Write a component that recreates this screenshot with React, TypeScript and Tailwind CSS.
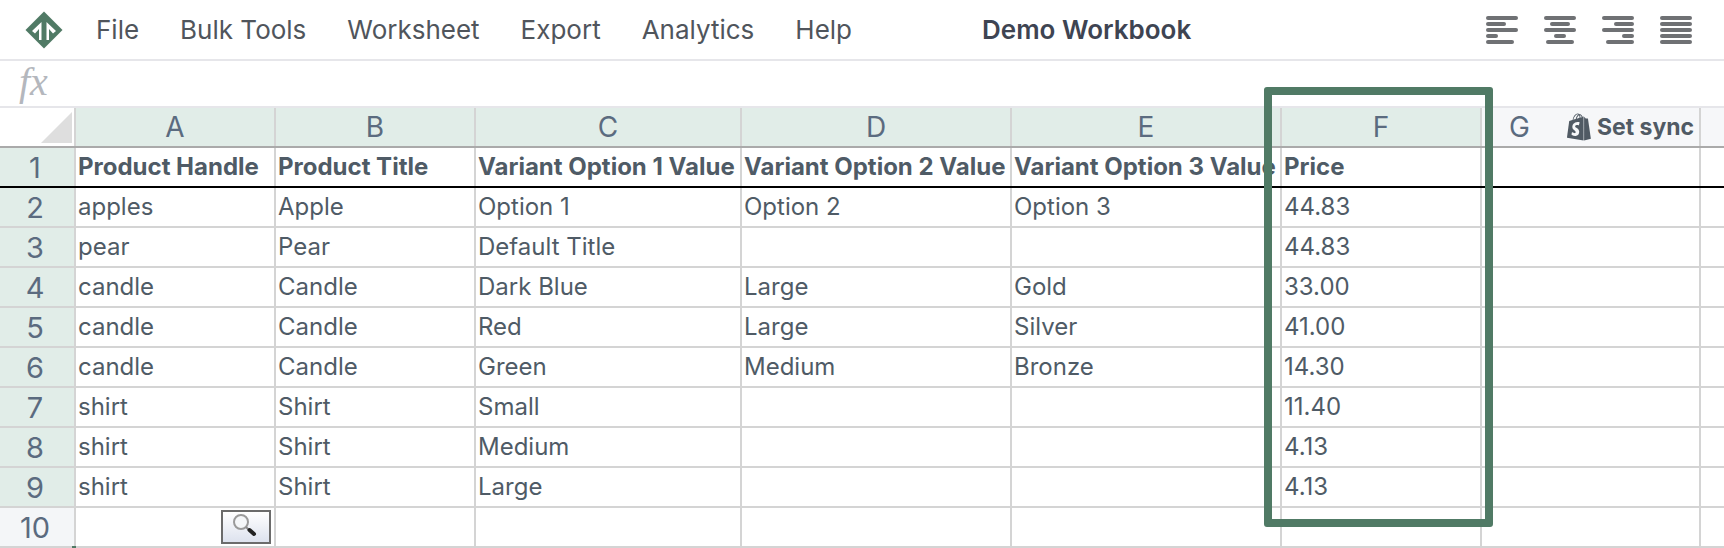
import { FaShopify } from 'react-icons/fa';

const menu = ['File', 'Bulk Tools', 'Worksheet', 'Export', 'Analytics', 'Help'];

const rows = [
  ['Product Handle', 'Product Title', 'Variant Option 1 Value', 'Variant Option 2 Value', 'Variant Option 3 Value', 'Price'],
  ['apples', 'Apple', 'Option 1', 'Option 2', 'Option 3', '44.83'],
  ['pear', 'Pear', 'Default Title', '', '', '44.83'],
  ['candle', 'Candle', 'Dark Blue', 'Large', 'Gold', '33.00'],
  ['candle', 'Candle', 'Red', 'Large', 'Silver', '41.00'],
  ['candle', 'Candle', 'Green', 'Medium', 'Bronze', '14.30'],
  ['shirt', 'Shirt', 'Small', '', '', '11.40'],
  ['shirt', 'Shirt', 'Medium', '', '', '4.13'],
  ['shirt', 'Shirt', 'Large', '', '', '4.13'],
  ['', '', '', '', '', ''],
];

const cols = ['A', 'B', 'C', 'D', 'E', 'F'];
const gridCols = 'grid grid-cols-[76px_200px_200px_266px_270px_270px_200px_219px_1fr] grid-rows-[minmax(0,1fr)]';

// four alignment icons, bar widths and offsets come from the screenshot
const alignIcons = [
  [[0, 32], [0, 20], [0, 32], [0, 12], [0, 28]],
  [[0, 32], [6, 20], [0, 32], [10, 12], [2, 28]],
  [[0, 32], [12, 20], [0, 32], [20, 12], [4, 28]],
  [[0, 32], [0, 32], [0, 32], [0, 32], [0, 32]],
];

function AlignIcon({ bars }: { bars: number[][] }) {
  return (
    <svg width="32" height="28" viewBox="0 0 32 28">
      {bars.map(([x, w], i) => (
        <rect key={i} x={x} y={i * 6} width={w} height="4" rx="2" fill="#6f7174" />
      ))}
    </svg>
  );
}

function Logo() {
  return (
    <svg width="38" height="38" viewBox="0 0 38 38">
      <path d="M19 0.5 L37.5 19 L19 37.5 L0.5 19 Z" fill="#507a65" />
      <path d="M7 20 L16.5 11 L16.5 29 L14 29 L14 18 L10 22.5 Z" fill="#fff" />
      <path d="M31 20 L21.5 11 L21.5 29 L24 29 L24 18 L28 22.5 Z" fill="#fff" />
    </svg>
  );
}

function SearchButton() {
  return (
    <div className="absolute right-[3px] top-[2px] w-[50px] h-[34px] border-[2px] border-[#6b6b6b] bg-gradient-to-b from-white to-[#dde2ee] flex items-center justify-center">
      <svg width="26" height="26" viewBox="0 0 26 26">
        <circle cx="8" cy="8" r="7" fill="#f4f6f8" stroke="#9a9a9a" strokeWidth="2" />
        <path d="M13 13 L16 16" stroke="#8a8a8a" strokeWidth="2" />
        <path d="M16.5 16 L21 20" stroke="#222" strokeWidth="4" strokeLinecap="round" />
      </svg>
    </div>
  );
}

export default function App() {
  return (
    <div className="relative w-[1724px] h-[548px] overflow-hidden bg-white text-[#4f5b66] font-['Inter',sans-serif]">
      <header className="h-[61px] flex items-center border-b-2 border-[#e6e6ea]">
        <div className="ml-[25px] w-[38px] flex"><Logo /></div>
        <nav className="flex gap-[41px] ml-[33px] text-[26px] text-[#50555c]">
          {menu.map((m) => (
            <span key={m}>{m}</span>
          ))}
        </nav>
        <div className="ml-[130px] text-[26px] font-semibold text-[#3e4452]">Demo Workbook</div>
        <div className="ml-auto mr-[32px] flex gap-[26px]">
          {alignIcons.map((bars, i) => (
            <AlignIcon key={i} bars={bars} />
          ))}
        </div>
      </header>

      <div className="h-[47px] flex items-center border-b-2 border-[#e6e6ea] pl-[19px] pb-[4px]">
        <span className="font-['Liberation_Serif',serif] italic text-[40px] leading-none text-[#b4b7bd]">fx</span>
      </div>

      <div className={`${gridCols} h-[40px] border-b-2 border-[#aaaaaa] text-[28px] leading-none text-[#5b6b7f]`}>
        <div className="bg-white flex items-end justify-end border-r-2 border-[#d4d4d4]">
          <div className="w-[31px] h-[31px] bg-[#dedede] [clip-path:polygon(100%_0,100%_100%,0_100%)] mr-[2px] mb-[3px]" />
        </div>
        {cols.map((c) => (
          <div key={c} className="bg-[#e1ede8] flex items-center justify-center border-r-2 border-[#d4d4d4]">
            {c}
          </div>
        ))}
        <div className="bg-[#f6f7f9] flex items-center whitespace-nowrap border-r-2 border-[#d4d4d4] pl-[27px]">
          G
          <span className="ml-[35px] flex items-center gap-[4px] text-[23px] font-bold text-[#505a64]">
            <FaShopify className="text-[28px]" />
            Set sync
          </span>
        </div>
        <div className="bg-[#f6f7f9]" />
      </div>

      {rows.map((row, i) => (
        <div
          key={i}
          className={`${gridCols} h-[40px] border-b-2 ${i === 0 ? 'border-black' : 'border-[#d4d4d4]'}`}
        >
          <div
            className={`${i < 9 ? 'bg-[#e1ede8]' : 'bg-[#f4f6f8]'} flex items-center justify-center pr-[4px] border-r-2 border-[#d4d4d4] text-[29px] leading-none text-[#5b6b7f]`}
          >
            {i + 1}
          </div>
          {row.map((cell, j) => (
            <div
              key={j}
              className={`relative flex items-center whitespace-nowrap pl-[2px] pb-[1px] border-r-2 border-[#d4d4d4] text-[24px] leading-none ${i === 0 ? 'font-bold' : ''}`}
            >
              {cell}
              {i === 9 && j === 0 && <SearchButton />}
            </div>
          ))}
          <div className="border-r-2 border-[#d4d4d4]" />
          <div />
        </div>
      ))}

      {/* selection box around column F */}
      <div className="absolute left-[1264px] top-[87px] w-[229px] h-[440px] border-[8px] border-[#507a65] rounded-[3px]" />
      {/* fill handle peeking out under the row headers */}
      <div className="absolute left-[72px] top-[546px] w-[4px] h-[2px] bg-[#507a65]" />
    </div>
  );
}
